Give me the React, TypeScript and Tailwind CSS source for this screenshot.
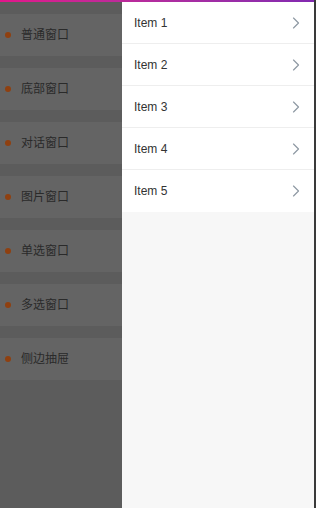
import { ChevronRight } from "lucide-react";

const menus = ["普通窗口", "底部窗口", "对话窗口", "图片窗口", "单选窗口", "多选窗口", "侧边抽屉"];
const items = ["Item 1", "Item 2", "Item 3", "Item 4", "Item 5"];

const App = () => {
  return (
    <div
      className="flex h-[508px] w-[316px] overflow-hidden bg-[#5c5c5c]"
      style={{ fontFamily: '"Liberation Sans", "Noto Sans CJK SC", sans-serif' }}
    >
      <div className="flex w-[314px] flex-col">
        {/* top bar */}
        <div className="h-[2px] w-full bg-gradient-to-r from-[#e3148a] to-[#8229b0]" />

        <div className="flex flex-1">
          {/* page behind the mask */}
          <div className="flex w-[122px] flex-col gap-3 bg-[#5c5c5c] pt-3">
            {menus.map((m) => (
              <div key={m} className="flex h-[42px] items-center bg-[#646464] pl-[5px]">
                <span className="h-[6px] w-[6px] rounded-full bg-[#8f4010]" />
                <span className="ml-[10px] text-[12px] text-[#2a2a2a]">{m}</span>
              </div>
            ))}
          </div>

          {/* drawer */}
          <div className="flex w-[192px] flex-col bg-[#f7f7f7]">
            {items.map((item, i) => (
              <div
                key={item}
                className={`flex h-[42px] items-center justify-between bg-white pl-3 pr-2 ${
                  i !== items.length - 1 ? "border-b border-[#eeeeee]" : ""
                }`}
              >
                <span className="text-[12px] text-[#333333]">{item}</span>
                <ChevronRight size={20} strokeWidth={1.4} className="text-[#8e99a3]" />
              </div>
            ))}
          </div>
        </div>
      </div>
      <div className="w-[2px] bg-[#3a3a3a]" />
    </div>
  );
};

export default App;
